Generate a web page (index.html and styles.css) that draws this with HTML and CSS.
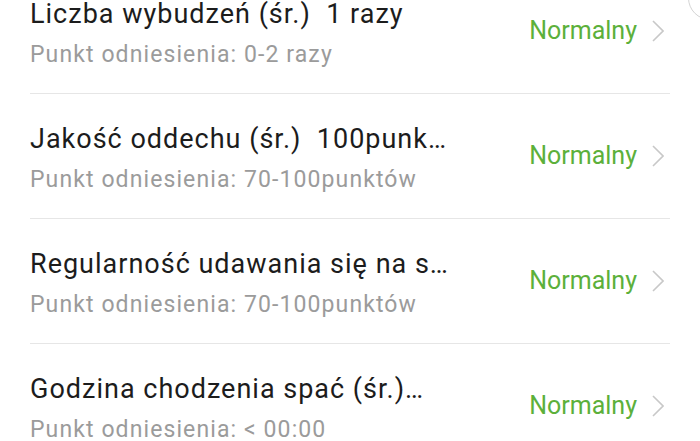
FILE: index.html
```html
<!DOCTYPE html>
<html lang="pl">
<head>
  <meta charset="UTF-8" />
  <title>Sen - szczegóły</title>
  <link rel="stylesheet" href="styles.css">
</head>
<body>

<div class="corner-btn"></div>

<ul class="list">
  <li class="item">
    <div class="info">
      <div class="title">Liczba wybudzeń (śr.)  1 razy</div>
      <div class="ref">Punkt odniesienia: 0-2 razy</div>
    </div>
    <div class="status">
      <span>Normalny</span>
      <svg class="chevron" width="12" height="22" viewBox="0 0 12 22"><path d="M1 1 L11 11 L1 21" /></svg>
    </div>
  </li>
  <li class="item">
    <div class="info">
      <div class="title">Jakość oddechu (śr.)  100punk…</div>
      <div class="ref">Punkt odniesienia: 70-100punktów</div>
    </div>
    <div class="status">
      <span>Normalny</span>
      <svg class="chevron" width="12" height="22" viewBox="0 0 12 22"><path d="M1 1 L11 11 L1 21" /></svg>
    </div>
  </li>
  <li class="item">
    <div class="info">
      <div class="title">Regularność udawania się na s…</div>
      <div class="ref">Punkt odniesienia: 70-100punktów</div>
    </div>
    <div class="status">
      <span>Normalny</span>
      <svg class="chevron" width="12" height="22" viewBox="0 0 12 22"><path d="M1 1 L11 11 L1 21" /></svg>
    </div>
  </li>
  <li class="item">
    <div class="info">
      <div class="title">Godzina chodzenia spać (śr.)…</div>
      <div class="ref">Punkt odniesienia: &lt; 00:00</div>
    </div>
    <div class="status">
      <span>Normalny</span>
      <svg class="chevron" width="12" height="22" viewBox="0 0 12 22"><path d="M1 1 L11 11 L1 21" /></svg>
    </div>
  </li>
</ul>

</body>
</html>
```

FILE: styles.css
```css
body {
  background-color: #fff;
  font-family: 'Roboto', 'Noto Sans', sans-serif;
  margin: 0;
  padding: 0;
  overflow: hidden;
}
.corner-btn {
  position: absolute;
  top: -24px;
  right: -32px;
  width: 42px;
  height: 42px;
  border: 1px solid #d4d4d4;
  border-radius: 50%;
}
.list {
  list-style: none;
  margin: -31px 0 0 0;
  padding: 0;
}
.item {
  display: flex;
  align-items: center;
  justify-content: space-between;
  height: 124px;
  margin: 0 30px;
  border-bottom: 1px solid #e6e6e6;
}
.info {
  padding-top: 3px;
}
.title {
  color: #1c1c1c;
  font-size: 27px;
  line-height: 34px;
  letter-spacing: 1px;
  white-space: pre;
}
.ref {
  color: #9b9b9b;
  font-size: 23px;
  line-height: 28px;
  letter-spacing: 1.1px;
  margin-top: 10px;
}
.status {
  display: flex;
  align-items: center;
  gap: 15px;
  padding-right: 6px;
  color: #5cb03b;
  font-size: 25px;
  line-height: 30px;
}
.chevron path {
  fill: none;
  stroke: #c8c8c8;
  stroke-width: 1.6;
}
```
